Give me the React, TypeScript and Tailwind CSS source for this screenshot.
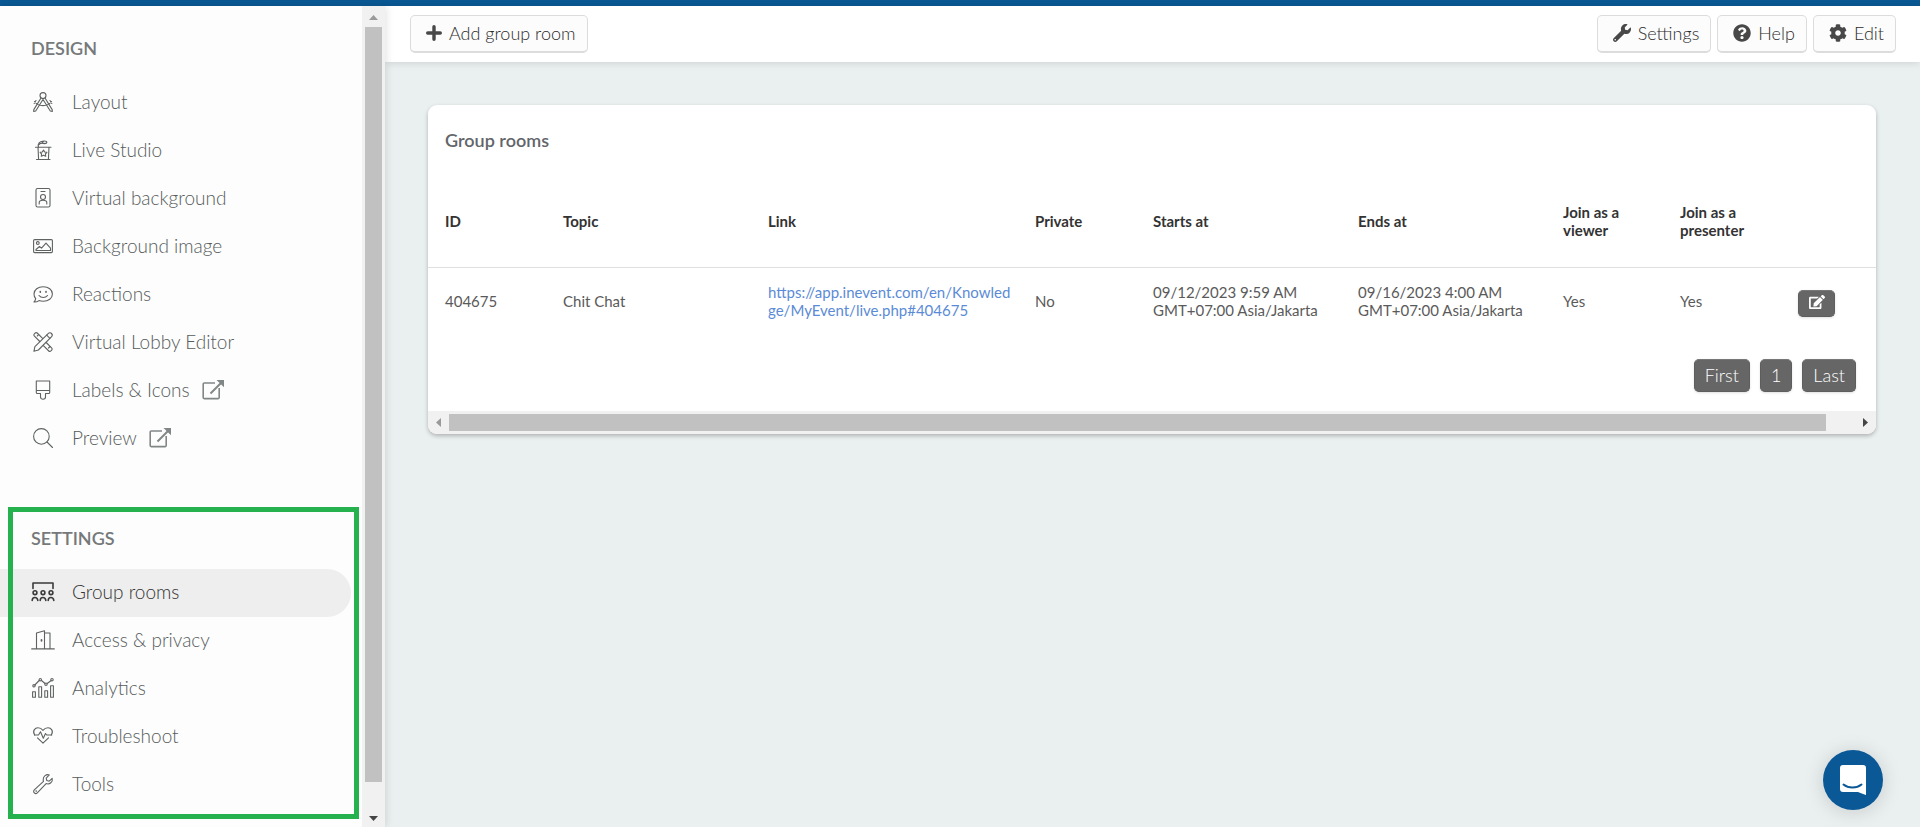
import type { ReactNode } from "react";
import { FaCog, FaEdit, FaQuestionCircle, FaWrench } from "react-icons/fa";

interface NavItem {
    label: string;
    icon: ReactNode;
    external?: boolean;
    active?: boolean;
}

// Thin line icon on a 24x24 grid
function LineIcon({ children, bold }: { children: ReactNode; bold?: boolean }) {
    return (
        <svg
            viewBox="0 0 24 24"
            className={`size-6 shrink-0 ${bold ? "text-[#3a3a3a]" : "text-[#5f6263]"}`}
            fill="none"
            stroke="currentColor"
            strokeWidth={bold ? 1.6 : 1.1}
            strokeLinecap="round"
            strokeLinejoin="round"
            aria-hidden="true"
        >
            {children}
        </svg>
    );
}

function ExternalIcon() {
    return (
        <svg viewBox="0 0 22 22" className="size-[22px] shrink-0 text-[#818686]" fill="none" stroke="currentColor" strokeWidth="1.6" aria-hidden="true">
            <path d="M13 4H2.2a1 1 0 0 0-1 1v13.6a1 1 0 0 0 1 1h14a1 1 0 0 0 1-1V9" />
            <path d="M8.500 14.500 19 4" strokeWidth="2" />
            <path d="M14.500 1H22v7.200Z" fill="currentColor" stroke="none" />
        </svg>
    );
}

function PlusIcon() {
    return (
        <svg viewBox="0 0 16 16" className="size-4" fill="none" stroke="currentColor" strokeWidth="3.4" strokeLinecap="round" aria-hidden="true">
            <path d="M8 1.700v12.600M1.700 8h12.600" />
        </svg>
    );
}

const DESIGN_ITEMS: NavItem[] = [
    {
        label: "Layout",
        icon: (
            <LineIcon>
                <circle cx="12" cy="5.600" r="3" />
                <path d="M10 8 2.800 19.600 2.700 21.500 4.700 21 12 9.500 19.300 21l2 .5-.1-1.900L14 8" />
                <path d="M3.500 11.500c4 5.500 13 5.500 17 0M3.200 13.500l1.800-3M20.800 13.500l-1.800-3" />
            </LineIcon>
        ),
    },
    {
        label: "Live Studio",
        icon: (
            <LineIcon>
                <path d="M5.500 21.500h13.500M4.500 9.200h15.500M7 9.200l.6 12.300M18 9.200l-.6 12.300" />
                <path d="M7.500 9c-1-3 1-6 5-5.600M8 6.500c2-2 4-1 6-1" />
                <ellipse cx="13.500" cy="4.300" rx="2.300" ry="1.300" />
                <path d="m12.500 12 1.200 2 2.200.4-1.500 1.600.3 2.200-2.200-.9-2.200.9.300-2.200-1.500-1.600 2.200-.4z" />
            </LineIcon>
        ),
    },
    {
        label: "Virtual background",
        icon: (
            <LineIcon>
                <rect x="5" y="2.500" width="14" height="18.500" rx="1.600" />
                <path d="M10 5.500h4" />
                <circle cx="12" cy="11" r="2.500" />
                <path d="M8.200 18v-1.500c0-1.500 1.500-2.200 3.800-2.200s3.800.7 3.800 2.200V18" />
            </LineIcon>
        ),
    },
    {
        label: "Background image",
        icon: (
            <LineIcon>
                <rect x="2.600" y="5.600" width="18.800" height="13" rx="1" />
                <circle cx="6.800" cy="9" r="1.400" />
                <path d="M5 16.500v-1l3.500-3 2 1.600 4.500-5 4.500 5v2.400z" />
            </LineIcon>
        ),
    },
    {
        label: "Reactions",
        icon: (
            <LineIcon>
                <path d="M3 20c1-1 1.500-2.200 1.700-3.300A7 7 0 0 1 3 12c0-4.300 4-7.300 9.200-7.300S21.400 7.700 21.400 12s-4 7.300-9.200 7.300c-1.500 0-2.900-.2-4.200-.7C6.500 19.600 5 20.200 3 20Z" />
                <path d="M9.300 9.700v.4M15 9.700v.4" strokeWidth="1.700" />
                <path d="M8 13.500c2 2.700 6.500 2.700 8.500 0" />
            </LineIcon>
        ),
    },
    {
        label: "Virtual Lobby Editor",
        icon: (
            <LineIcon>
                <path d="m8.800 11.500-5.600-5.600c-1.300-1.300 1.700-4.200 3-2.900l5.400 5.400M15.200 12.500l5.600 5.600c1.300 1.300-1.700 4.200-3 2.900l-5.400-5.400" />
                <path d="m2.900 21.300 1-4.600L17.400 3.400c2-2 5.200 1.200 3.200 3.200L7.400 20z" />
                <path d="m15.700 5.200 3.200 3.200M7.600 4.700 6.300 6M19 16.500l-1.500 1.500" />
            </LineIcon>
        ),
    },
    {
        label: "Labels & Icons",
        external: true,
        icon: (
            <LineIcon>
                <path d="M5.300 3h13.400v11.500a1 1 0 0 1-1 1h-3.200v3.500c0 3-5 3-5 0v-3.500H6.300a1 1 0 0 1-1-1zM5.300 12.500h13.400" />
            </LineIcon>
        ),
    },
    {
        label: "Preview",
        external: true,
        icon: (
            <LineIcon>
                <circle cx="10.400" cy="10.400" r="7.800" />
                <path d="m16 16 5.500 5.500" />
            </LineIcon>
        ),
    },
];

const SETTINGS_ITEMS: NavItem[] = [
    {
        label: "Group rooms",
        active: true,
        icon: (
            <LineIcon bold>
                <path d="M2 8.500V3h20v5.500" />
                <circle cx="4" cy="12.700" r="1.900" />
                <circle cx="12" cy="12.700" r="1.900" />
                <circle cx="20" cy="12.700" r="1.900" />
                <path d="M1.200 20.500c0-4 5.200-4 5.600 0M9.200 20.500c0-4 5.200-4 5.600 0M17.200 20.500c0-4 5.200-4 5.600 0" />
            </LineIcon>
        ),
    },
    {
        label: "Access & privacy",
        icon: (
            <LineIcon>
                <path d="M.7 20.900h22.600M5.500 20.900V5l8-2.300v18.200M13.500 5h5.500v15.900" />
                <path d="M10.500 12v.8" strokeWidth="1.800" />
            </LineIcon>
        ),
    },
    {
        label: "Analytics",
        icon: (
            <LineIcon>
                <path d="M1.600 21.200v-5.500h2.800v5.500zM7.800 21.200V10.700h2.800v10.500zM13.800 21.200v-6.500h2.800v6.500zM19.600 21.200V9.700h2.800v11.500z" />
                <path d="m3.800 9 4.400-4.500M10.500 4.500 14 7.500M16.200 7.500l4-3" />
                <circle cx="3" cy="9.800" r="1.200" />
                <circle cx="9.300" cy="3.700" r="1.200" />
                <circle cx="15" cy="8.200" r="1.200" />
                <circle cx="21" cy="3.700" r="1.200" />
            </LineIcon>
        ),
    },
    {
        label: "Troubleshoot",
        icon: (
            <LineIcon>
                <path d="M3.700 11C1 7 4 3.700 7 3.700c2 0 3.700 1 5 2.600 1.300-1.600 3-2.600 5-2.600 3 0 6 3.300 3.300 7.300M6.500 13.800 12 19.200l5.500-5.400" />
                <path d="M3.500 11h4l2-3.200 2.800 6.400 2.200-4.700 1.200 1.500h5" />
            </LineIcon>
        ),
    },
    {
        label: "Tools",
        icon: (
            <LineIcon>
                <path d="M18.300 2.900c-3-1-6.300 1.200-6.100 4.800 0 .6.100 1.100.3 1.600L3.300 17.800c-2 2 1 5 3 3l8.800-9.200c3.600 1.300 7-1.700 6.100-5.300l-3 2.900-2.400-.7-.6-2.400z" />
                <path d="M5.200 19v.1" strokeWidth="1.600" />
            </LineIcon>
        ),
    },
];

const HEADINGS = ["ID", "Topic", "Link", "Private", "Starts at", "Ends at", "Join as a viewer", "Join as a presenter"];

function NavList({ title, items }: { title: string; items: NavItem[] }) {
    return (
        <>
            <h2 className="px-[31px] text-lg leading-6 font-semibold text-[#76797a]">{title}</h2>
            <ul className="mt-[19px]">
                {items.map((item) => (
                    <li key={item.label}>
                        <a
                            href="#"
                            className={`mr-[11px] flex h-12 items-center gap-[17px] rounded-r-full pb-0.5 pl-[31px] text-[19px] font-light ${item.active ? "bg-[#eeeeee] text-[#333333]" : "text-[#565b5b]"}`}
                        >
                            {item.icon}
                            <span className="flex items-center gap-3">
                                {item.label}
                                {item.external && <ExternalIcon />}
                            </span>
                        </a>
                    </li>
                ))}
            </ul>
        </>
    );
}

function ToolbarButton({ icon, children }: { icon: ReactNode; children: ReactNode }) {
    return (
        <button
            type="button"
            className="flex h-[38px] items-center gap-[7px] rounded-[5px] border border-b-2 border-[#dcdcdc] bg-[#fcfcfc] pr-[11px] pb-0.5 pl-[15px] text-lg font-light text-[#2c2c2c]"
        >
            <span className="text-[#484848]">{icon}</span>
            {children}
        </button>
    );
}

function PageButton({ children }: { children: ReactNode }) {
    return (
        <button
            type="button"
            className="h-[33px] rounded-[5px] border border-[#5e5e5e] border-t-[#777777] bg-[#666666] px-2.5 pb-0.5 text-lg leading-7 font-light text-white shadow-sm"
        >
            {children}
        </button>
    );
}

export default function App() {
    return (
        <div className="flex h-screen flex-col overflow-hidden bg-[#eaeff0] font-['Lato',sans-serif]">
            <div className="h-1.5 shrink-0 bg-[#0a5894]" />

            <div className="flex min-h-0 flex-1">
                {/* Sidebar */}
                <aside className="z-10 flex shrink-0 bg-[#fdfdfd] shadow-[1px_0_8px_rgba(0,0,0,0.12)]">
                    <nav className="w-[362px] overflow-hidden pt-[30px]">
                        <NavList title="DESIGN" items={DESIGN_ITEMS} />
                        <div className="relative mt-[63px]">
                            <NavList title="SETTINGS" items={SETTINGS_ITEMS} />
                            <div className="pointer-events-none absolute -top-[19px] right-[3px] -bottom-[10px] left-2 border-[5px] border-[#26b14f]" />
                        </div>
                    </nav>

                    <div className="flex w-[23px] flex-col items-center bg-[#f1f1f1]">
                        <svg viewBox="0 0 17 21" className="h-[21px] w-[17px]" aria-hidden="true">
                            <path d="M4 14 8.500 9l4.500 5z" fill="#9a9a9a" />
                        </svg>
                        <div className="w-[17px] flex-[755] bg-[#c1c1c1]" />
                        <div className="flex-[24]" />
                        <svg viewBox="0 0 17 21" className="h-[21px] w-[17px]" aria-hidden="true">
                            <path d="M4 10h9l-4.500 5z" fill="#454545" />
                        </svg>
                    </div>
                </aside>

                <main className="min-w-0 flex-1">
                    {/* Toolbar */}
                    <header className="flex h-14 items-center gap-1.5 bg-white pr-6 pl-[25px] shadow-[0_1px_8px_rgba(0,0,0,0.12)]">
                        <ToolbarButton icon={<PlusIcon />}>Add group room</ToolbarButton>
                        <div className="flex-1" />
                        <ToolbarButton icon={<FaWrench className="size-[18px]" />}>Settings</ToolbarButton>
                        <ToolbarButton icon={<FaQuestionCircle className="size-[18px]" />}>Help</ToolbarButton>
                        <ToolbarButton icon={<FaCog className="size-[18px]" />}>Edit</ToolbarButton>
                    </header>

                    <section className="mt-[43px] mr-11 ml-[43px] overflow-hidden rounded-[9px] bg-white shadow-[0_2px_4px_rgba(0,0,0,0.25)]">
                        <h1 className="h-[72px] px-[17px] pt-[23px] text-lg leading-6 font-semibold text-[#62656a]">Group rooms</h1>

                        <table className="w-full table-fixed text-left text-[15px] leading-[18px]">
                            <colgroup>
                                <col className="w-[118px]" />
                                <col className="w-[205px]" />
                                <col className="w-[267px]" />
                                <col className="w-[118px]" />
                                <col className="w-[205px]" />
                                <col className="w-[205px]" />
                                <col className="w-[117px]" />
                                <col className="w-[118px]" />
                                <col className="w-[95px]" />
                            </colgroup>
                            <thead>
                                <tr className="h-[90px] border-b border-[#dddfe0] text-[#333333]">
                                    {HEADINGS.map((heading) => (
                                        <th key={heading} scope="col" className="pr-6 pb-0.5 pl-[17px] font-bold">
                                            {heading}
                                        </th>
                                    ))}
                                    <td />
                                </tr>
                            </thead>
                            <tbody>
                                <tr className="h-[68px] text-[#5a5a5a]">
                                    <td className="pl-[17px]">404675</td>
                                    <td className="pl-[17px]">Chit Chat</td>
                                    <td className="pr-1 pl-[17px] break-all">
                                        <a href="#" className="text-[#5b8bd6]">
                                            https://app.inevent.com/en/Knowledge/MyEvent/live.php#404675
                                        </a>
                                    </td>
                                    <td className="pl-[17px]">No</td>
                                    <td className="pl-[17px]">
                                        09/12/2023 9:59 AM
                                        <br />
                                        GMT+07:00 Asia/Jakarta
                                    </td>
                                    <td className="pl-[17px]">
                                        09/16/2023 4:00 AM
                                        <br />
                                        GMT+07:00 Asia/Jakarta
                                    </td>
                                    <td className="pl-[17px]">Yes</td>
                                    <td className="pl-[17px]">Yes</td>
                                    <td className="pt-1 pl-[17px]">
                                        <button
                                            type="button"
                                            aria-label="Edit"
                                            className="flex h-[27px] w-[37px] items-center justify-center rounded-[5px] border border-[#5e5e5e] border-t-[#777777] bg-[#666666] pb-0.5 text-white shadow-sm"
                                        >
                                            <FaEdit className="size-4" />
                                        </button>
                                    </td>
                                </tr>
                            </tbody>
                        </table>

                        <div className="flex justify-end gap-2.5 pt-6 pr-5 pb-[19px]">
                            <PageButton>First</PageButton>
                            <PageButton>1</PageButton>
                            <PageButton>Last</PageButton>
                        </div>

                        <div className="flex h-[23px] items-center bg-[#f1f1f1]">
                            <svg viewBox="0 0 21 17" className="h-[17px] w-[21px]" aria-hidden="true">
                                <path d="M13 4v9L8 8.500z" fill="#9a9a9a" />
                            </svg>
                            <div className="h-[17px] flex-[1377] bg-[#c1c1c1]" />
                            <div className="flex-[29]" />
                            <svg viewBox="0 0 21 17" className="h-[17px] w-[21px]" aria-hidden="true">
                                <path d="M8 4v9l5-4.500z" fill="#454545" />
                            </svg>
                        </div>
                    </section>
                </main>
            </div>

            {/* Chat launcher */}
            <button
                type="button"
                aria-label="Open chat"
                className="fixed right-[37px] bottom-[17px] z-20 flex size-[60px] items-center justify-center rounded-full bg-[#0b5896] shadow-[0_2px_20px_rgba(0,0,0,0.15)]"
            >
                <svg viewBox="0 0 28 32" className="h-8 w-7" aria-hidden="true">
                    <path d="M4 1h20a3 3 0 0 1 3 3V31c-3-.8-5.500-2-8-3H4a3 3 0 0 1-3-3V4a3 3 0 0 1 3-3Z" fill="#fff" />
                    <path d="M4.500 20.500c5 4 13 4 18 0" fill="none" stroke="#0b5896" strokeWidth="2" strokeLinecap="round" />
                </svg>
            </button>
        </div>
    );
}
